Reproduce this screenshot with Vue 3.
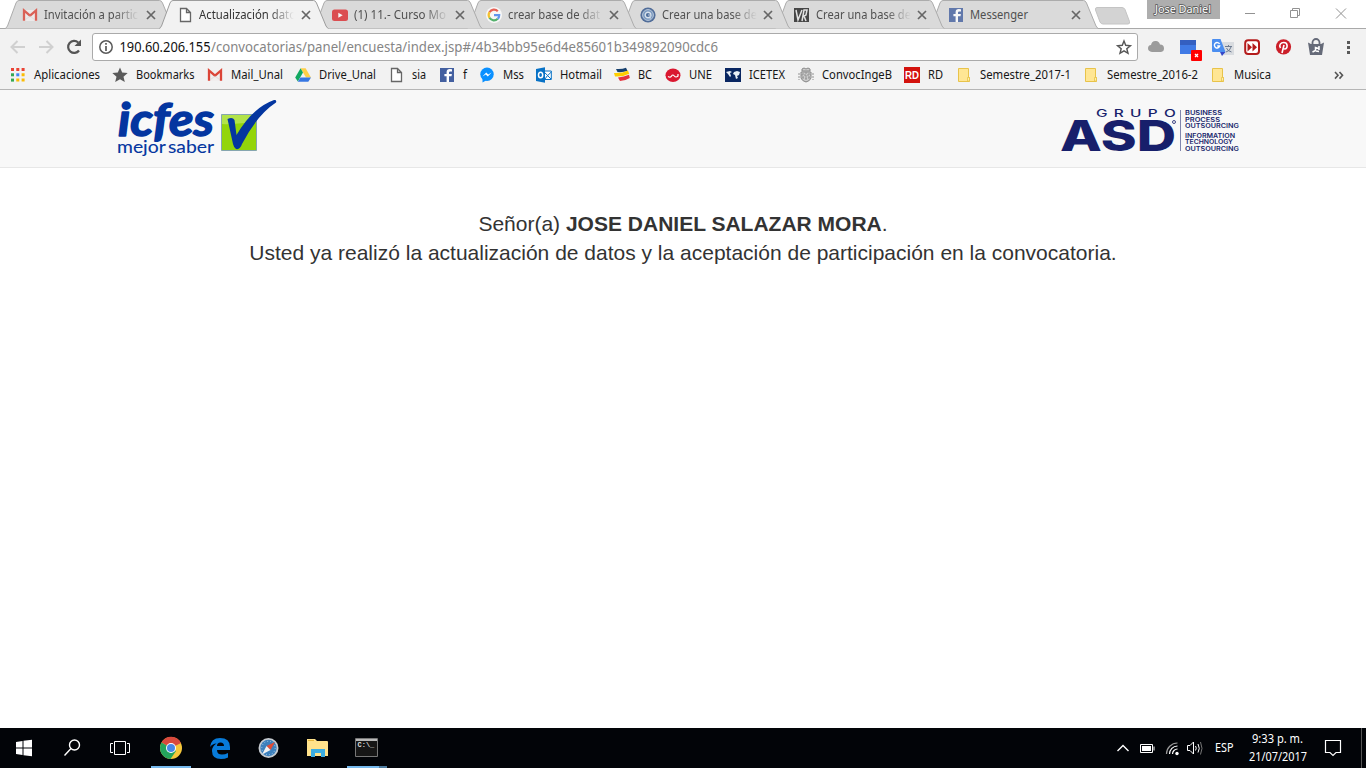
<script setup>
const page = '<path d="M3.5 1.5h6l4 4v9h-10zM9.5 1.5v4h4" fill="#fff" stroke="#666" stroke-width="1.3"/>'
const gmail = '<path d="M1 3h14v11H1z" fill="#f1eeee"/><path d="M2 13.8V3.5l6 5.2 6-5.2v10.300" fill="none" stroke="#db4437" stroke-width="2.3"/><path d="M3 13l5-4 5 4" fill="none" stroke="#d8d3d3" stroke-width=".7"/>'
const facebook = '<path d="M1 1h14v14H1z" fill="#4460a0"/><path d="M10 15V9.3h2.5l.4-2.3H10V5.5q0-1.1 1.2-1.1H13V2.3q-.9-.2-2.2-.2-3.2 0-3.2 3V7H5.4v2.3h2.2V15z" fill="#fff"/>'
const folder = '<path d="M2.5 1.5h10v9h1v4h-11z" fill="#ffe694" stroke="#e8c34a"/><path d="M11.5 14v-3.5h2V14z" fill="#fff0a8" stroke="#e8c34a" stroke-width=".8"/>'
const icons = {
  page, gmail, facebook, folder,
  youtube: '<rect x="0" y="2.5" width="16" height="11.5" rx="2.5" fill="#dc2c30"/><path d="M6.3 5.7v5l4.4-2.5z" fill="#fff"/>',
  google: '<circle cx="8" cy="8" r="8" fill="#fff"/><g fill="none" stroke-width="2.2"><path d="M3.5 5.2A5.2 5.2 0 0 1 11.8 4.2" stroke="#ea4335"/><path d="M3.5 5.2a5.3 5.3 0 0 0 0 5.6" stroke="#fbbc05"/><path d="M3.5 10.8a5.2 5.2 0 0 0 8.2 1" stroke="#34a853"/><path d="M8 8.2h5.2q0 2.4-1.5 3.6" stroke="#4285f4"/></g>',
  ring: '<circle cx="8" cy="8" r="7.6" fill="#2f5289"/><circle cx="8" cy="8" r="5.4" fill="#5f86b8" stroke="#b3c6dc"/><circle cx="8" cy="8" r="2.8" fill="#2d558e" stroke="#d9e4f0" stroke-width="1.4"/><path d="M8 8h3l-1 4" stroke="#b8cae0" fill="none"/>',
  vr: '<path d="M0 1h15v14H0z" fill="#222"/><path d="M2 3l2 10 4-10M8 14l2-11h3l-1 5-2 1 2 5" fill="none" stroke="#e4e4e4" stroke-width="1.5"/>',
  apps: '<path d="M1 1h3v3H1zM6.300 1h3v3h-3zM11.600 1h3v3h-3z" fill="#ea4335"/><path d="M1 6.300h3v3H1z" fill="#34a853"/><path d="M6.300 6.300h3v3h-3z" fill="#4285f4"/><path d="M11.600 6.300h3v3h-3zM6.300 11.600h3v3h-3zM11.600 11.600h3v3h-3z" fill="#fbbc05"/><path d="M1 11.600h3v3H1z" fill="#34a853"/>',
  star: '<path d="M8 .6l2.200 5 5.500.5-4.200 3.600 1.300 5.400L8 12.200 3.200 15.100l1.300-5.400L.3 6.100l5.500-.5z" fill="#5a5a5a"/>',
  drive: '<path d="M5.600 1.300h5L16 10.500h-5z" fill="#ffcf48"/><path d="M5.600 1.300L.2 10.400l2.600 4.200L8 5.600z" fill="#11a861"/><path d="M5.400 10.500H16l-2.700 4.200H2.800z" fill="#3777e3"/>',
  messenger: '<circle cx="8" cy="7.300" r="6.700" fill="#0a90ff"/><path d="M3.500 11v4.500l3.500-2z" fill="#0a90ff"/><path d="M3.500 9.500l3.700-4 2 2 3.400-2-3.800 4-2-2z" fill="#fff"/>',
  outlook: '<path d="M8 4h7.300v8.500H8z" fill="#fff" stroke="#0872c6"/><path d="M8 5l3.700 3.500L15.300 5M9 12l2.500-3.500 3.500 3.500" fill="none" stroke="#0872c6"/><path d="M0 2l9-1.700v15.500L0 14z" fill="#0872c6"/><ellipse cx="4.600" cy="8" rx="2.100" ry="2.800" fill="none" stroke="#fff" stroke-width="1.500"/>',
  bank: '<path d="M2 2q6 .5 10-1.200l1.500 3.200q-5 1.500-10 1z" fill="#17406e"/><path d="M0 6q8 .5 14-2.500l1.200 3.200Q9 10 1 9.500z" fill="#ffce00"/><path d="M4 10.500q6-.5 11-2.700l.8 3.200Q11 14 6 14z" fill="#e5343e"/>',
  une: '<ellipse cx="8" cy="8.300" rx="7.500" ry="6.800" fill="#da1730"/><path d="M3 9.500q2.500 1.500 3.600-.5t2.700 0T13 9V7" fill="none" stroke="#fff" stroke-width="1.200"/>',
  icetex: '<path d="M0 1h16v14H0z" fill="#092661"/><path d="M1 5l4-1 2 1-2 1 1 3-1 1-2-3zM9 5l3-1 3 1-1 3-2 1 1 2-2 1-1-4-2-1z" fill="#e8eff6"/>',
  shield: '<path d="M4 2l2-1 2 1 2-1 2 1v2H4zM3 5h10v6q-1 3-5 4-4-1-5-4z" fill="#ccc" stroke="#888"/><path d="M5 6v6M8 5v10M11 6v6M3 8h10M4 11h8M1 6v7M15 6v7" stroke="#929292" stroke-dasharray="2 1"/>',
  rd: '<path d="M0 0h16v16H0z" fill="#d3120d"/><text x="1" y="12" font-family="Liberation Sans,sans-serif" font-size="10.500" font-weight="bold" fill="#fff" textLength="14" lengthAdjust="spacingAndGlyphs">RD</text>'
}
const tabs = [
  { icon: 'gmail', title: 'Invitación a partic', w: 94 },
  { icon: 'page', title: 'Actualización dato', w: 97, active: true },
  { icon: 'youtube', title: '(1) 11.- Curso Mo', w: 92 },
  { icon: 'google', title: 'crear base de dat', w: 92 },
  { icon: 'ring', title: 'Crear una base de', w: 95 },
  { icon: 'vr', title: 'Crear una base de', w: 95 },
  { icon: 'facebook', title: 'Messenger', w: 58 }
]
const order = [6, 5, 4, 3, 2, 0, 1]
const bookmarks = [
  { icon: 'apps', text: 'Aplicaciones', w: 66, slot: 102 },
  { icon: 'star', text: 'Bookmarks', w: 58.5, slot: 95 },
  { icon: 'gmail', text: 'Mail_Unal', w: 52, slot: 88 },
  { icon: 'drive', text: 'Drive_Unal', w: 57, slot: 93 },
  { icon: 'page', text: 'sia', w: 14, slot: 51 },
  { icon: 'facebook', text: 'f', w: 4, slot: 40 },
  { icon: 'messenger', text: 'Mss', w: 21, slot: 57 },
  { icon: 'outlook', text: 'Hotmail', w: 42, slot: 78 },
  { icon: 'bank', text: 'BC', w: 14, slot: 51 },
  { icon: 'une', text: 'UNE', w: 23, slot: 60 },
  { icon: 'icetex', text: 'ICETEX', w: 36, slot: 73 },
  { icon: 'shield', text: 'ConvocIngeB', w: 70, slot: 106 },
  { icon: 'rd', text: 'RD', w: 15, slot: 52 },
  { icon: 'folder', text: 'Semestre_2017-1', w: 91, slot: 127 },
  { icon: 'folder', text: 'Semestre_2016-2', w: 91, slot: 127 },
  { icon: 'folder', text: 'Musica', w: 37, slot: 70 }
]
</script>

<template>
  <div class="screen">
    <div class="tabstrip">
      <svg class="shapes" width="1366" height="29">
        <path d="M0 28.500H1366" stroke="#a9a9a9" />
        <path v-for="n in order" :key="n" :transform="`translate(${n * 154} 0)`"
          d="M5.500 28.500L7.500 26 16 3Q17 .5 19 .5H159.500Q161.500 .5 162.500 3L172 26 174 28.500"
          :fill="n === 1 ? '#f2f2f2' : '#dadada'" :stroke="n === 1 ? '#9c9c9c' : '#acacac'" />
        <path d="M160.500 28.500H327.500" stroke="#f2f2f2" />
        <path d="M1097 7.500h25q2 0 3 2l4.500 12q.5 2.500-1.500 2.500h-25q-2 0-3-2l-4.500-12q-.5-2.500 1.500-2.500z" fill="#d3d3d3" stroke="#c4c4c4" />
      </svg>
      <div class="tabs">
        <div v-for="(t, i) in tabs" :key="i" class="tab" :class="{ active: t.active }">
          <svg class="icon" width="16" height="16" v-html="icons[t.icon]"></svg>
          <svg class="title" width="97" height="28"><text y="19" :textLength="t.w" lengthAdjust="spacingAndGlyphs">{{ t.title }}</text></svg>
          <svg class="close" width="10" height="10"><path d="M1 1l8 8M9 1l-8 8" /></svg>
        </div>
      </div>
      <div class="user">
        <svg width="57" height="18"><text y="12.500" textLength="56" lengthAdjust="spacingAndGlyphs">Jose Daniel</text></svg>
      </div>
      <svg class="winbtns" width="146" height="28" fill="none" stroke="#929292">
        <path d="M25 13.500h10M70.500 10.500h7v7h-7zM72.500 10.500v-2h7v7H78M116 8.500l10 10M126 8.500l-10 10" />
      </svg>
    </div>

    <div class="toolbar">
      <svg class="nav" width="92" height="32" fill="none">
        <path d="M25 18H11.500M17.500 12l-6 6 6 6M39 18h13.500M46.500 12l6 6-6 6" stroke="#d0d0d0" stroke-width="2" />
        <path d="M79 21.500a6 6 0 1 1-.8-8" stroke="#555" stroke-width="2.200" /><path d="M81 10.500v6.500h-6.500z" fill="#555" />
      </svg>
      <div class="omnibox">
        <svg width="27" height="26" fill="none" stroke="#5a5a5a"><circle cx="13" cy="13" r="6.200" stroke-width="1.500" /><path d="M13 12v5M13 9v1.700" stroke-width="1.700" /></svg>
        <svg class="url" width="990" height="26">
          <text x="-.5" y="18" textLength="91" lengthAdjust="spacingAndGlyphs" fill="#111">190.60.206.155</text>
          <text x="91" y="18" textLength="507" lengthAdjust="spacingAndGlyphs" fill="#858585">/convocatorias/panel/encuesta/index.jsp#/4b34bb95e6d4e85601b349892090cdc6</text>
        </svg>
        <svg width="27" height="26"><path d="M14 7l1.700 4.300 4.700.4-3.600 3 1.200 4.600-4-2.500-4 2.500 1.200-4.600-3.600-3 4.700-.4z" fill="none" stroke="#555" stroke-width="1.400" /></svg>
      </div>
      <svg class="ext" width="228" height="36">
        <path d="M14 23q-4-.5-4-3.700 0-3 3-3.300 1-4.500 5-4 3 0 4 3.500 4 .2 4 4 0 3-3 3.500z" fill="#9b9b9b" />
        <path d="M43 11h14q1 0 1 1v13H42V12q0-1 1-1z" fill="#407ae5" /><path d="M42 11h16v5H42z" fill="#345fc0" />
        <rect x="53" y="21" width="11" height="11" rx="1" fill="#f00" /><path d="M57 25l3 3m0-3l-3 3" stroke="#fff" stroke-width="1.300" />
        <path d="M82 13h14v13H86z" fill="#d9dce0" /><path d="M75 10h7.500l5 13H75q-1 0-1-1V11q0-1 1-1z" fill="#4b8ef0" /><path d="M82 23h5.500L84 27z" fill="#3548c8" />
        <path d="M81.500 15a2.700 2.700 0 1 0 .2 2h-2.500" fill="none" stroke="#fff" stroke-width="1.400" /><path d="M87 17.500h7M90.500 16v2M93 18q-1 4-5 5M88.500 19q1 3 5 4" stroke="#6d7b91" fill="none" />
        <rect x="107.200" y="11.200" width="13.800" height="13.800" rx="3" fill="#fff" stroke="#b41c1c" stroke-width="2" /><path d="M109.500 14l4.500 4.200-4.500 4.300zM114.500 14l4.500 4.200-4.500 4.300z" fill="#b41c1c" />
        <circle cx="145.500" cy="17.800" r="7.600" fill="#cb1f29" /><path d="M144 24l2-8M142.500 19c-2-3 .3-5.500 3.300-5.500 4.500 0 4 6.500 1 6.500-1 0-1.500-.7-1.500-1" fill="none" stroke="#fff" stroke-width="1.600" />
        <path d="M170 13.500l3 1.500h10l3-1.500-2 12.500h-12z" fill="#656a78" /><path d="M174.500 16v-2.500a3.500 3.500 0 0 1 7 0V16" fill="none" stroke="#656a78" stroke-width="1.800" /><path d="M174.500 23l3-1.500v-3l3 1M181 17v4M178 22l3 .5" stroke="#fff" stroke-width="1.500" fill="none" />
        <path d="M209 12h3v3h-3zM209 17h3v3h-3zM209 22h3v3h-3z" fill="#5a5a5a" />
      </svg>
    </div>

    <div class="bookmarks">
      <div v-for="(b, i) in bookmarks" :key="i" class="bookmark" :style="{ width: b.slot + 'px' }">
        <svg class="icon" width="16" height="16" v-html="icons[b.icon]"></svg>
        <svg :width="b.w + 2" height="28"><text y="18" :textLength="b.w" lengthAdjust="spacingAndGlyphs">{{ b.text }}</text></svg>
      </div>
      <svg class="more" width="10" height="9"><path d="M1 1l3 3.300-3 3.300M5.500 1l3 3.300-3 3.300" /></svg>
    </div>

    <header class="header">
      <svg class="icfes" width="165" height="70">
        <g fill="#0436a0" stroke="#0436a0">
          <text class="script" x="1" y="42" stroke-width="1.500" stroke-linejoin="round" textLength="96" lengthAdjust="spacingAndGlyphs">icfes</text>
          <text class="motto" x="0" y="58.500" stroke-width=".1" textLength="97" lengthAdjust="spacingAndGlyphs">mejor saber</text>
        </g>
        <path d="M104.500 20.500h35v36h-35z" fill="#93d50a" stroke="#86a6b0" /><path d="M105 21h34v6q-17 4-34 3z" fill="#b2e34a" />
        <path d="M110.500 25q5-2.500 7 1l2 15Q135 14 157 6q3-.5 2 2.500Q140 21 125 50q-2 6-6 5-2-1-3-5z" fill="#0436a0" />
      </svg>
      <svg class="asd" width="182" height="60" fill="#171f6b">
        <text class="big" x="0" y="49.500" textLength="116" lengthAdjust="spacingAndGlyphs">ASD</text>
        <text class="grupo" x="36" y="16" textLength="86" lengthAdjust="spacingAndGlyphs">GRUPO</text>
        <circle cx="114" cy="21" r="1.500" fill="none" stroke="#171f6b" stroke-width=".8" />
        <path d="M120.500 9v41" stroke="#8085ad" />
        <g class="tiny">
          <text x="125" y="14" textLength="37" lengthAdjust="spacingAndGlyphs">BUSINESS</text>
          <text x="125" y="20.500" textLength="35" lengthAdjust="spacingAndGlyphs">PROCESS</text>
          <text x="125" y="27" textLength="54" lengthAdjust="spacingAndGlyphs">OUTSOURCING</text>
          <text x="125" y="36.500" textLength="50" lengthAdjust="spacingAndGlyphs">INFORMATION</text>
          <text x="125" y="43" textLength="48" lengthAdjust="spacingAndGlyphs">TECHNOLOGY</text>
          <text x="125" y="49.500" textLength="54" lengthAdjust="spacingAndGlyphs">OUTSOURCING</text>
        </g>
      </svg>
    </header>

    <main class="content">
      <div>Señor(a) <b>JOSE DANIEL SALAZAR MORA</b>.</div>
      <div>Usted ya realizó la actualización de datos y la aceptación de participación en la convocatoria.</div>
    </main>

    <footer class="taskbar">
      <svg width="400" height="40" fill="none">
        <path d="M16 14l6.500-1v6.500H16zM23.500 12.800L32 11.700v7.800h-8.500zM16 20.500h6.500V27L16 26zM23.500 20.500H32v7.800l-8.500-1.100z" fill="#fff" />
        <circle cx="74.500" cy="17" r="5" stroke="#fff" stroke-width="1.400" /><path d="M71 20.500l-6.500 7" stroke="#fff" stroke-width="1.400" />
        <path d="M114.500 13.500h11v13h-11zM113 15.500h-2.500v9h2.500M127 15.500h2.500v9H127" stroke="#fff" />
        <circle cx="171" cy="20" r="11" fill="#f5c73b" /><path d="M171 20L161.500 14.500A11 11 0 0 1 181 15z" fill="#d9493d" /><path d="M171 20l-9.500-5.500A11 11 0 0 0 170.500 31l5.500-8z" fill="#24a45c" />
        <circle cx="171" cy="20" r="5" fill="#fff" /><circle cx="171" cy="20" r="4" fill="#4788e8" />
        <path d="M210 19q1-9 10-9 10 0 10 9v3h-13q0 4.500 5 4.500 3 0 6-1.500v4.500q-3 1.500-7 1.500-9 0-9-8 0-5 4.500-7.500-4 0-6.500 3.500zM217 18h7q0-3.500-3.500-3.500T217 18z" fill="#087bd9" fill-rule="evenodd" />
        <circle cx="268.500" cy="20" r="10" fill="#c6cbd0" /><circle cx="268.500" cy="20" r="8.200" fill="#3c80bc" /><circle cx="268.500" cy="20" r="6.700" stroke="#a6cce9" stroke-dasharray="1 2" />
        <path d="M275 14l-4.500 8-4-4z" fill="#e34c35" /><path d="M262 26.500l4.500-8.500 4 4z" fill="#f1f1f1" />
        <path d="M307 11h8l2 2h10q1 0 1 1v14h-21z" fill="#ffe28b" /><path d="M308 12h6v1h-6z" fill="#e6b63c" /><path d="M311 29v-8h14v8h-4v-4h-6v4z" fill="#3cade1" />
        <path d="M355.500 10.500h22v18h-22z" fill="#161616" stroke="#777" /><path d="M356 11h21v2h-21z" fill="#b9b9b9" />
        <text x="357.500" y="19" class="cmd">C:\_</text>
        <path d="M151 38h40v2h-40zM347 38h32v2h-32z" fill="#76b9ed" /><path d="M379 38h8v2h-8z" fill="#4e7ca0" />
      </svg>
      <svg width="266" height="40" fill="none" stroke="#fff">
        <path d="M17.500 23l5.500-5.500 5.500 5.500" stroke-width="1.400" />
        <path d="M40.500 16.500h12v8h-12zM54 18.500v4" /><path d="M42 18h9v5h-9z" fill="#fff" stroke="none" />
        <g stroke-width="1.200"><path d="M66.500 26a11 11 0 0 1 11-11" stroke="#999" /><path d="M69.500 26a8 8 0 0 1 8-8M72.500 26a5 5 0 0 1 5-5" /></g><circle cx="77" cy="25.500" r="1.700" fill="#fff" stroke="none" />
        <path d="M87.500 17.500h2.500l3.500-3.500v12L90 22.500h-2.500zM95.500 18q1.500 2 0 4.500M98 16q2.500 4.500 0 8.500" /><path d="M100.500 14q3 6.500 0 12.500" stroke="#777" />
        <g class="traytext" stroke="none" fill="#fff">
          <text x="115" y="24" textLength="18.500" lengthAdjust="spacingAndGlyphs">ESP</text>
          <text x="152" y="15" textLength="51" lengthAdjust="spacingAndGlyphs">9:33 p. m.</text>
          <text x="149" y="33" textLength="58" lengthAdjust="spacingAndGlyphs">21/07/2017</text>
        </g>
        <path d="M225.500 12.500h15v12H236l-3 3-3-3h-4.500z" stroke-width="1.200" /><path d="M261.500 0v40" stroke="#555" />
      </svg>
    </footer>
  </div>
</template>

<style>
body { margin: 0; overflow: hidden; }
</style>
<style scoped>
.screen { width: 1366px; height: 768px; display: flex; flex-direction: column; background: #fff; overflow: hidden; }
svg { display: block; flex: none; overflow: visible; }
.tabstrip, .bookmarks, .omnibox, .traytext { font-family: "Noto Sans", "Open Sans", sans-serif; font-size: 12px; }
.tabstrip { position: relative; display: flex; height: 29px; background: #fff; }
.shapes { position: absolute; left: 0; top: 0; }
.tabs { position: relative; display: flex; width: 1147px; flex: none; }
.tab { display: flex; align-items: center; box-sizing: border-box; width: 154px; height: 30px; padding-left: 24px; flex: none; }
.tab:first-child { padding-left: 22px; }
.tab.active { padding-left: 23px; }
.tab .icon { margin-right: 6px; opacity: .8; }
.tab.active .icon { opacity: 1; }
.title { fill: #505050; align-self: flex-start; mask-image: linear-gradient(to right, #000 70px, transparent 95px); }
.tab:last-child .title { mask-image: none; }
.tab.active .title { fill: #333; }
.close { margin-left: 4px; fill: none; stroke: #666; stroke-width: 1.7; }
.tab:first-child .close, .tab.active .close { margin-left: 5px; }
.user { position: relative; width: 73px; height: 19px; background: #aeaeae; flex: none; display: flex; justify-content: center; }
.user text { fill: #fff; stroke: #555; stroke-width: 1.5px; paint-order: stroke; font-size: 11px; }
.winbtns { position: relative; margin-left: auto; }
.toolbar { display: flex; height: 36px; background: #f2f2f2; }
.omnibox { display: flex; box-sizing: border-box; width: 1046px; height: 28px; margin-top: 4px; background: #fff; border: 1px solid #aaa; border-radius: 3px; flex: none; }
.omnibox .url { font-size: 14px; }
.bookmarks { display: flex; box-sizing: border-box; height: 25px; padding-left: 10px; background: #f2f2f2; border-bottom: 1px solid #b5b5b5; }
.bookmark { display: flex; flex: none; height: 24px; margin-top: -4px; }
.bookmark .icon { margin: 6px 8px 0 0; }
.bookmark text { fill: #161616; }
.more { margin: 6px 0 0 54px; fill: none; stroke: #555; stroke-width: 1.6; }
.header { display: flex; justify-content: space-between; box-sizing: border-box; height: 78px; padding: 4px 124px 0 117px; background: #f8f8f8; border-bottom: 1px solid #e7e7e7; }
.script { font: italic 700 45px Lato, sans-serif; }
.motto { font: 16.5px Lato, sans-serif; word-spacing: -2px; }
.asd { margin-top: 7px; }
.big { font: 800 42px Inter, sans-serif; }
.grupo { font: 500 9.8px Inter, sans-serif; letter-spacing: 4px; }
.tiny { font: 600 5.8px Inter, sans-serif; }
.content { flex: 1; padding-top: 41px; text-align: center; color: #333; font: 21px/29px "Liberation Sans", Arial, sans-serif; }
.taskbar { display: flex; justify-content: space-between; height: 40px; background: #020408; }
.cmd { font: bold 7px "Liberation Mono", monospace; fill: #ddd; }
</style>
